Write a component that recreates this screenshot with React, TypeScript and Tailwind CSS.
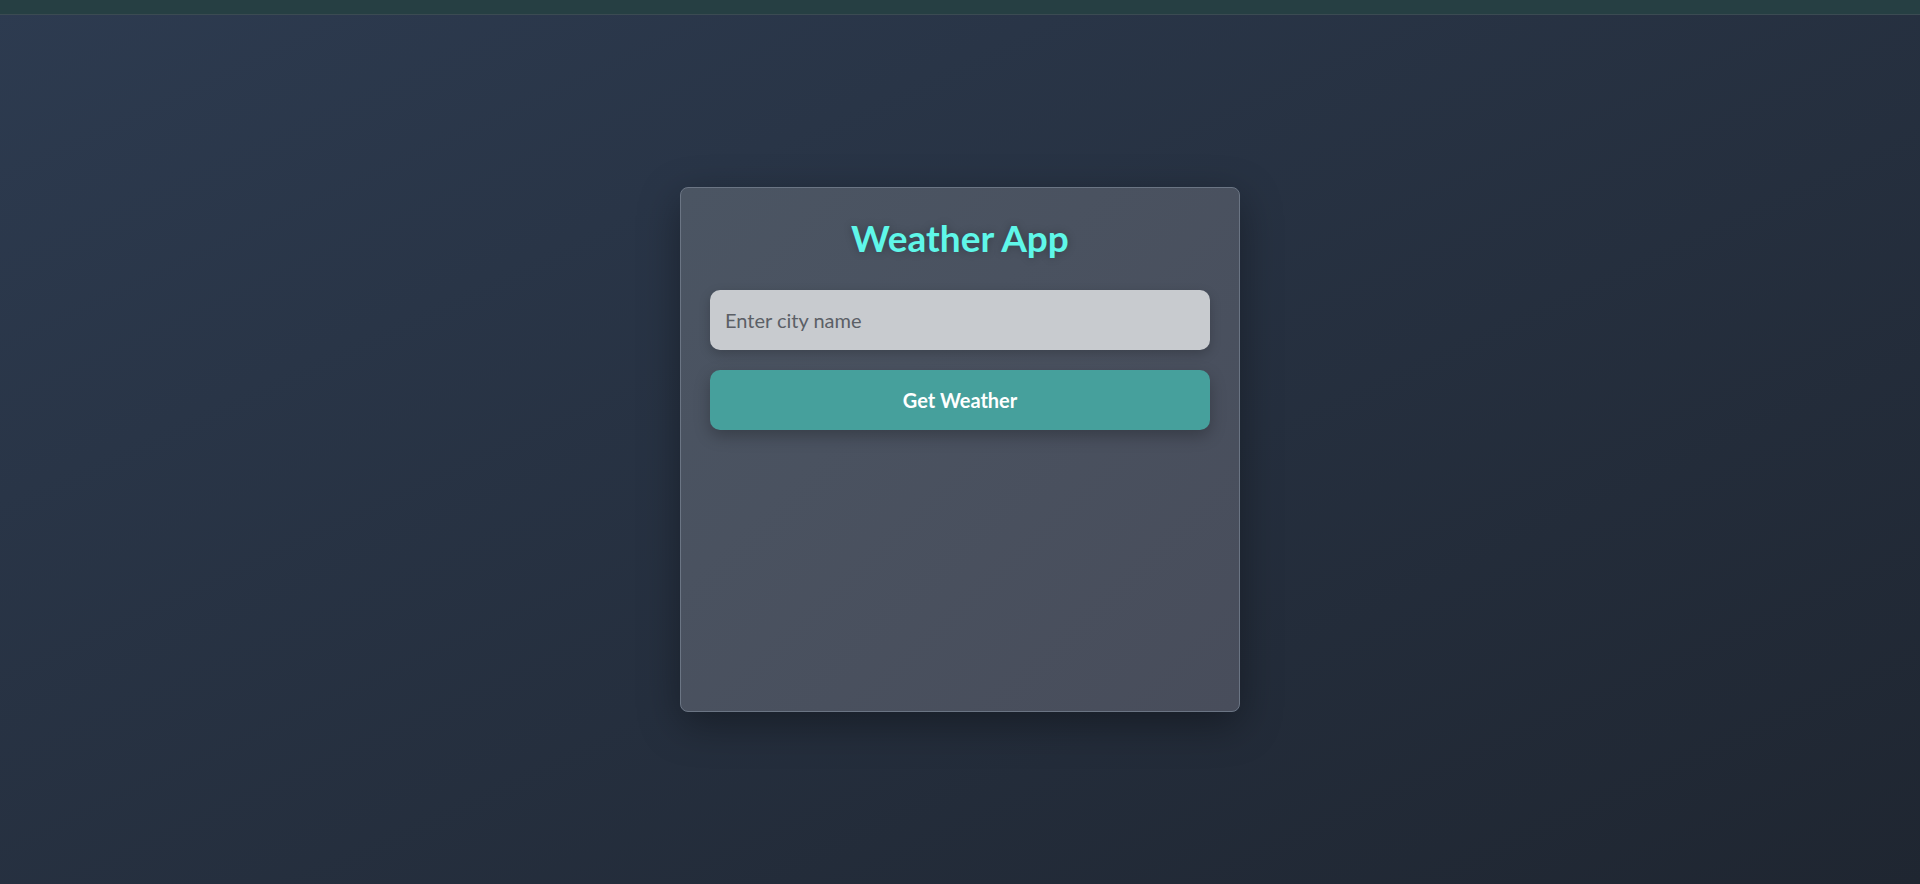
import { useState } from 'react';

export default function App() {
  const [city, setCity] = useState('');

  return (
    <div className="min-h-screen flex flex-col bg-gradient-to-br from-[#2d3b50] to-[#1f2631] font-['Lato','Open_Sans',sans-serif]">
      <div className="h-[15px] bg-[#263f43] border-b border-[#3b4b52]" />
      <div className="flex-1 flex justify-center pt-[172px]">
        <div className="w-[560px] h-[525px] rounded-lg border border-[#6b7584] bg-gradient-to-br from-[#4b5563] to-[#484d5b] shadow-[0_12px_40px_rgba(0,0,0,0.35)] px-[29px] pt-[28px]">
          <h1 className="text-center text-[37px] leading-[1.2] font-bold text-[#5ff7e9] [text-shadow:0_0_8px_rgba(0,0,0,0.25)]">
            Weather App
          </h1>
          <div className="mt-[30px] flex flex-col gap-5">
            <input
              value={city}
              onChange={(e) => setCity(e.target.value)}
              placeholder="Enter city name"
              className="h-[60px] w-full rounded-[10px] bg-[#c8cbcf] px-[15px] text-[20px] text-[#333] placeholder:text-[#5b5f66] outline-none shadow-[0_4px_12px_rgba(0,0,0,0.2)]"
            />
            <button className="h-[60px] w-full rounded-[10px] bg-[#46a09c] text-[20px] font-bold text-white shadow-[0_6px_16px_rgba(0,0,0,0.25)]">
              Get Weather
            </button>
          </div>
        </div>
      </div>
    </div>
  );
}
